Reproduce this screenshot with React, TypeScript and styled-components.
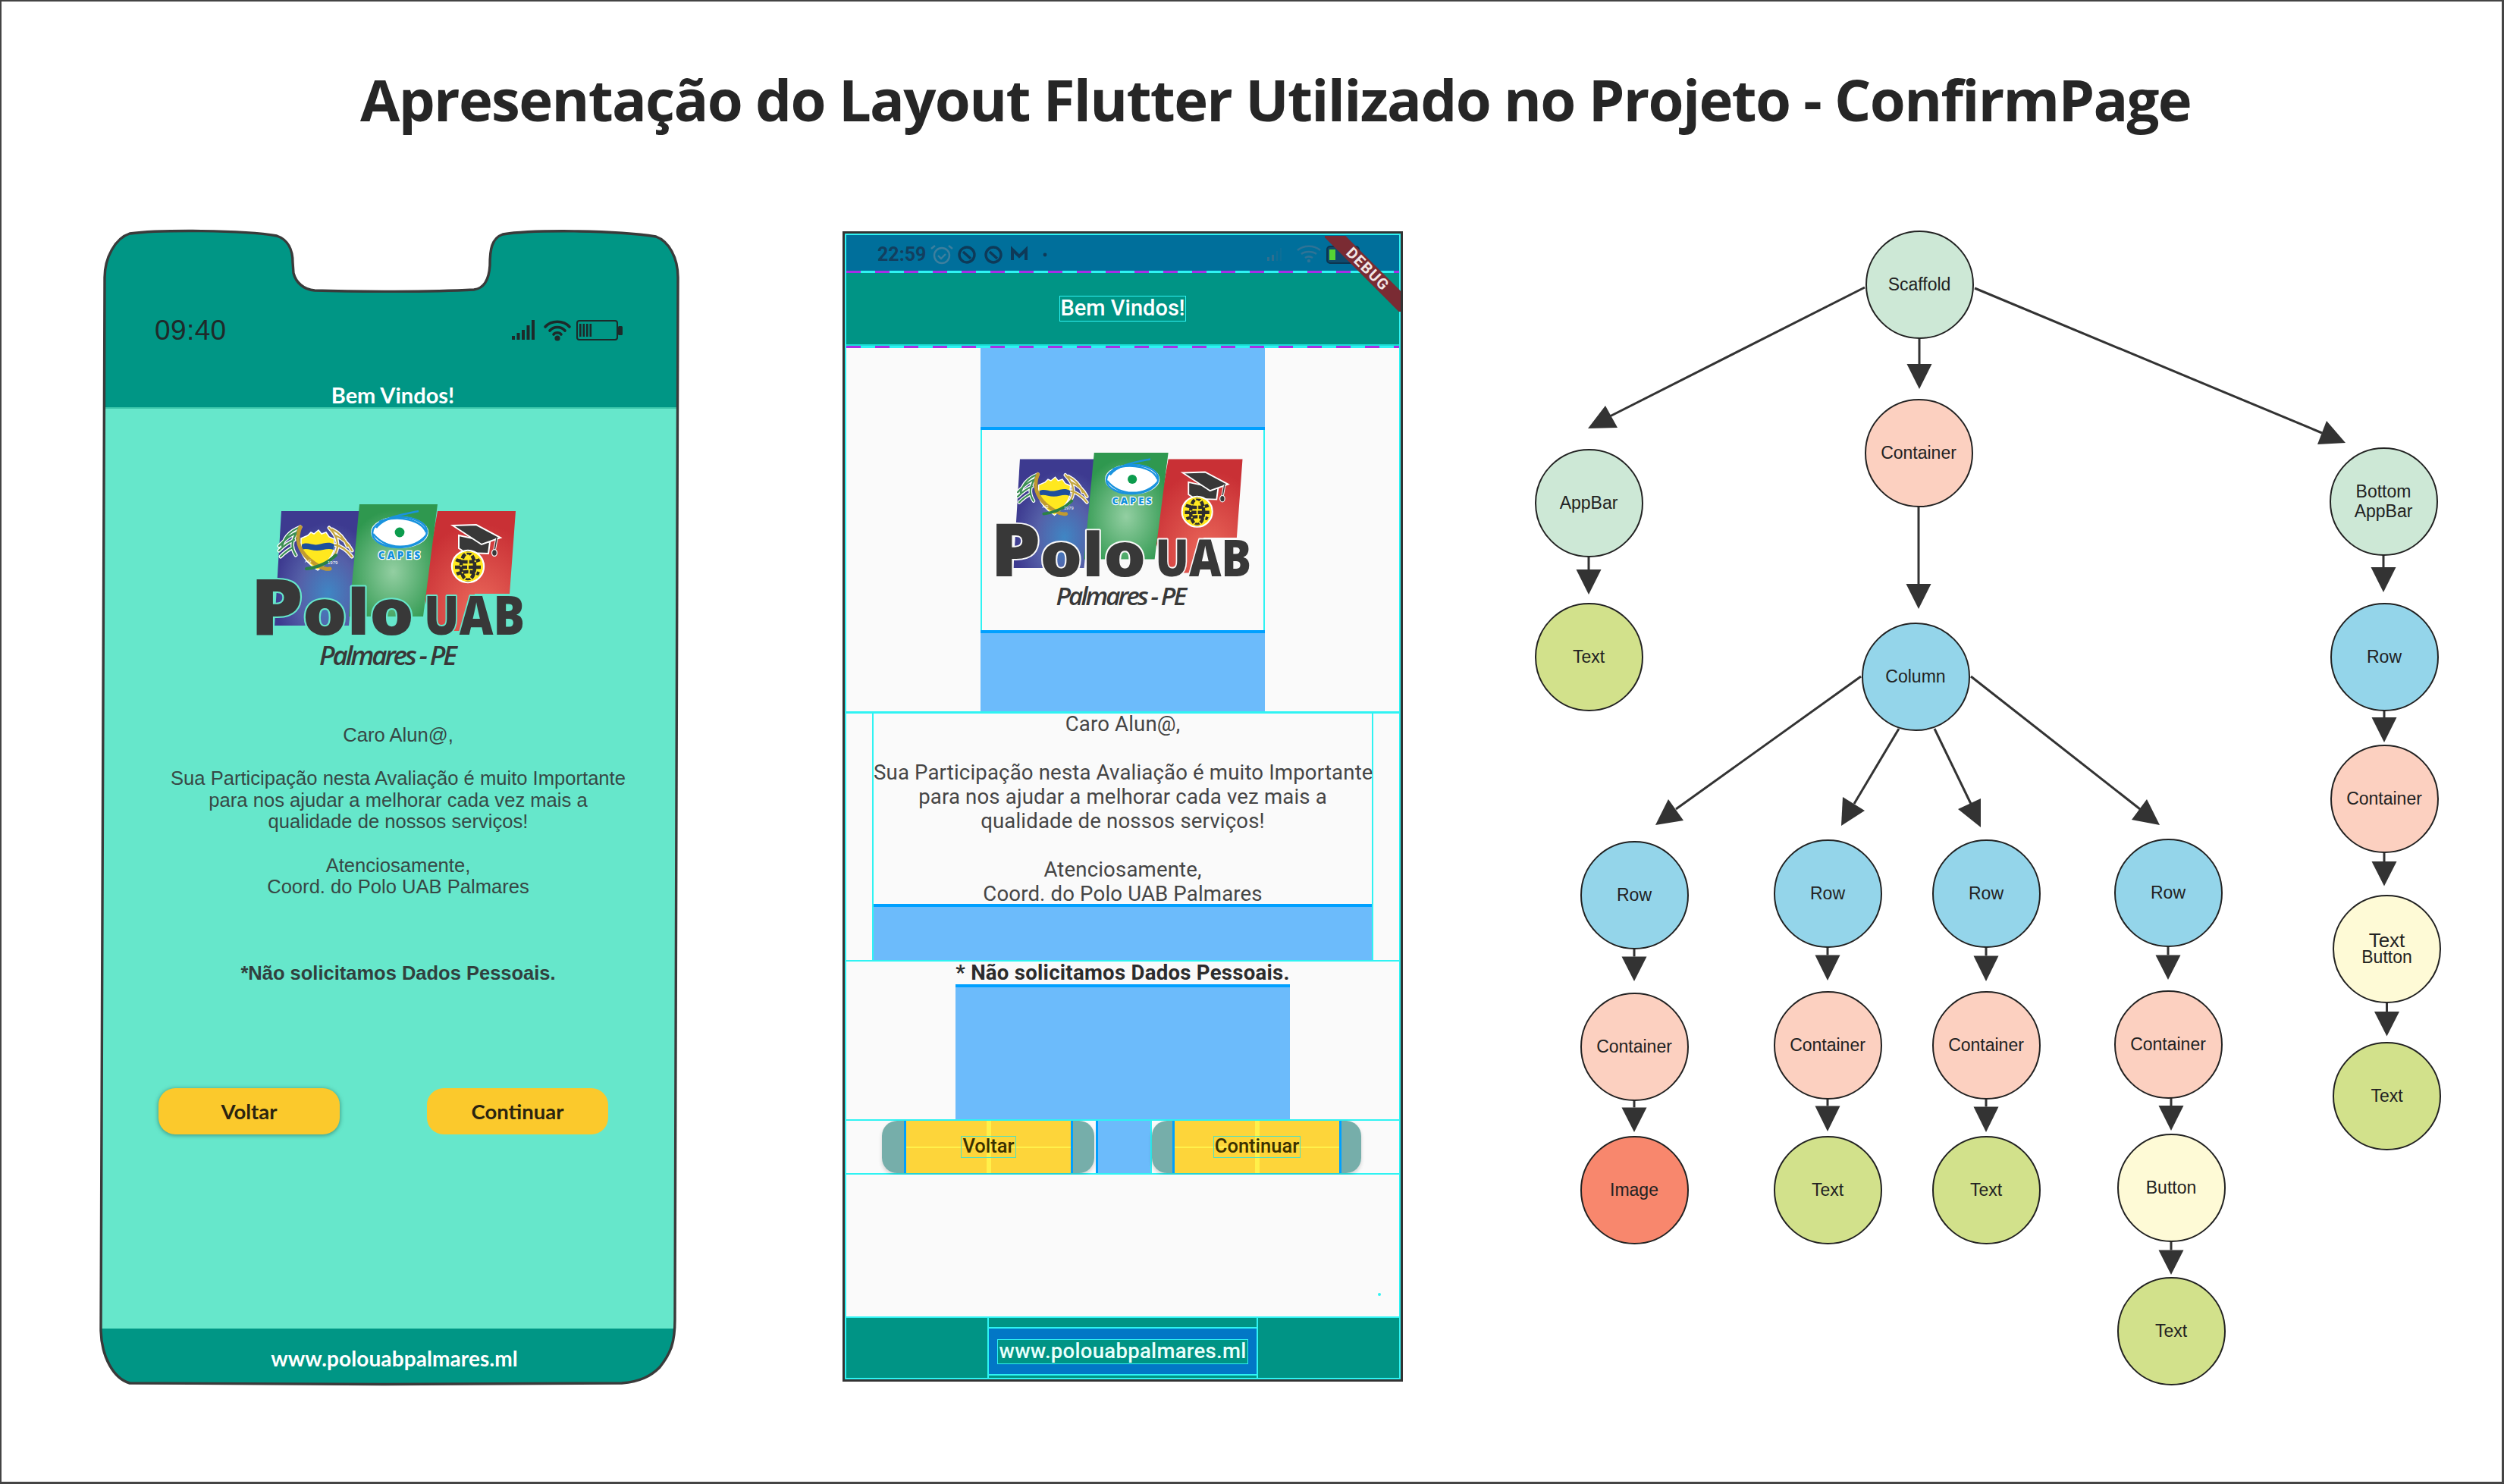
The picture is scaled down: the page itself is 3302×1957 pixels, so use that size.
import React from "react";
import styled, { createGlobalStyle } from "styled-components";

const Global = createGlobalStyle`
  html, body { margin: 0; padding: 0; background: #fff; }
  #root { width: 3302px; }
`;

const Page = styled.div`
  width: 3302px;
  height: 1957px;
  box-sizing: border-box;
  border: 2px solid #444;
  border-right-width: 3px;
  border-bottom-width: 3px;
  background: #fff;
  overflow: hidden;
`;

const Title = styled.h1`
  margin: 79px 0 119px;
  height: 100px;
  line-height: 100px;
  text-align: center;
  font-family: "Open Sans", "Liberation Sans", sans-serif;
  font-weight: 700;
  font-size: 76px;
  letter-spacing: -1.7px;
  color: #262626;
  padding-left: 63px;
`;

const Columns = styled.main`
  display: flex;
  align-items: flex-start;
  padding-left: 128px;
`;

/* ---------- Logo ---------- */

const LogoSvg = styled.svg<{ $w: number }>`
  display: block;
  overflow: visible;
  width: ${(p) => p.$w}px;
  height: ${(p) => Math.round((p.$w * 225) / 360)}px;
`;

const logoFont = `"Open Sans", "Liberation Sans", sans-serif`;

function Logo({ w, halo, id }: { w: number; halo: string; id: string }) {
  return (
    <LogoSvg $w={w} viewBox="0 0 360 225">
      <defs>
        <radialGradient id={`${id}b`} cx="0.62" cy="0.72" r="0.62">
          <stop offset="0" stopColor="#3f86c4" />
          <stop offset="0.55" stopColor="#5560a8" />
          <stop offset="1" stopColor="#3d3a90" />
        </radialGradient>
        <radialGradient id={`${id}g`} cx="0.5" cy="0.6" r="0.55">
          <stop offset="0" stopColor="#93cfa2" />
          <stop offset="1" stopColor="#2f984f" />
        </radialGradient>
        <radialGradient id={`${id}r`} cx="0.6" cy="0.85" r="0.75">
          <stop offset="0" stopColor="#ec6a5c" />
          <stop offset="1" stopColor="#c93035" />
        </radialGradient>
      </defs>
      <polygon points="41,14 146,14 130,165 32,165" fill={`url(#${id}b)`} />
      <polygon points="247,14 350,14 342,123 296,123 288,172 240,172 228,120" fill={`url(#${id}r)`} />
      <polygon points="144,5 247,5 228,153 130,153" fill={`url(#${id}g)`} />

      {/* crest */}
      <g fill="none" strokeLinecap="round">
        <path d="M66 35C48 42 45 52 42 60M66 35C55 50 52 60 60 72M62 42C50 46 42 56 38 60M58 52C48 56 42 62 38 66M56 62C48 66 44 70 40 74" stroke="#fff" strokeWidth="5" />
        <path d="M66 35C48 42 45 52 42 60M66 35C55 50 52 60 60 72M62 42C50 46 42 56 38 60M58 52C48 56 42 62 38 66M56 62C48 66 44 70 40 74" stroke="#3d8f55" strokeWidth="2.4" />
        <path d="M108 38C120 44 125 52 128 60M104 36C118 50 118 64 108 76M112 46C122 50 130 58 134 66M110 58C120 60 128 66 134 74" stroke="#fff" strokeWidth="5" />
        <path d="M108 38C120 44 125 52 128 60M104 36C118 50 118 64 108 76M112 46C122 50 130 58 134 66M110 58C120 60 128 66 134 74" stroke="#c5a843" strokeWidth="2.4" />
      </g>
      <path d="M67 50L76 46 80 42 84 44 90 39 94 44 100 42 104 48 111 51 110 66C106 78 96 86 89 92 80 86 70 78 67 66Z" fill="#ffe81f" stroke="#fff" strokeWidth="1.5" />
      <path d="M68 58C76 54 82 60 90 58 98 56 104 54 111 58L110 65C102 62 96 66 88 66 80 66 74 62 68 65Z" fill="#1e4f9c" />
      <path d="M66 35C60 50 62 64 78 78 88 86 98 92 105 90" fill="none" stroke="#c09a30" strokeWidth="5" strokeLinecap="round" />
      <path d="M113 72C103 82 92 88 74 90" fill="none" stroke="#2b8146" strokeWidth="4" strokeLinecap="round" />
      <text x="72" y="82" fontSize="6" fill="#fff" fontFamily="Liberation Sans, sans-serif">AG</text>
      <text x="102" y="84" fontSize="6" fill="#fff" fontFamily="Liberation Sans, sans-serif">1979</text>

      {/* CAPES */}
      <ellipse cx="197" cy="42" rx="36" ry="19" fill="#fff" stroke="#fff" strokeWidth="4" />
      <g fill="none" stroke="#1a93de" strokeWidth="2.6">
        <ellipse cx="197" cy="42" rx="36" ry="20" transform="rotate(-2 197 42)" />
        <path d="M166 36C176 22 202 18 222 14" />
        <path d="M162 44C180 66 214 66 232 46" />
        <path d="M170 28C196 18 226 26 232 42" />
      </g>
      <circle cx="197" cy="42" r="6.4" fill="#0c9c4d" />
      <text x="198" y="77" textAnchor="middle" fontFamily={logoFont} fontWeight={800} fontSize="13.5" letterSpacing="3.2" fill="#1190dc" stroke="#fff" strokeWidth="2.4" paintOrder="stroke">CAPES</text>

      {/* cap and globe */}
      <path d="M275 46L275 63 284 69 314 70 316 55Z" fill="#383838" stroke="#fff" strokeWidth="2" />
      <polygon points="267,33 298,32 330,49 305,58" fill="#383838" stroke="#fff" strokeWidth="2" />
      <path d="M325 50L322 66" stroke="#fff" strokeWidth="3.6" />
      <path d="M325 50L322 66" stroke="#383838" strokeWidth="1.6" />
      <ellipse cx="322" cy="69" rx="3.4" ry="4.4" fill="#383838" stroke="#fff" strokeWidth="1.2" />
      <circle cx="287" cy="87" r="21" fill="#ffe81f" stroke="#fff" strokeWidth="2.4" />
      <g fill="none" stroke="#2d2d2d" strokeWidth="4.6" strokeDasharray="7 2">
        <ellipse cx="287" cy="87" rx="9" ry="18" />
        <path d="M271 78C280 82 294 82 303 78M270 88H304M272 97C282 93 292 93 302 97" />
      </g>
      <circle cx="287" cy="87" r="19" fill="none" stroke="#ffe81f" strokeWidth="1.6" />

      {/* wordmark */}
      <g fontFamily={logoFont} fontWeight={800} fill="#383838" stroke={halo} strokeWidth="4" paintOrder="stroke" strokeLinejoin="round">
        <text x="0" y="177" fontSize="102" textLength="70" lengthAdjust="spacingAndGlyphs">P</text>
        <text x="69" y="177" fontSize="84" textLength="147" lengthAdjust="spacingAndGlyphs">olo</text>
        <text x="229" y="177" fontSize="71" textLength="133" lengthAdjust="spacingAndGlyphs">UAB</text>
      </g>
      <text x="91" y="217" fontFamily={logoFont} fontWeight={600} fontStyle="italic" fontSize="35" letterSpacing="-3.1" fill="#383838">Palmares - PE</text>
    </LogoSvg>
  );
}

/* ---------- Phone mockup ---------- */

const Phone = styled.section`
  position: relative;
  flex: none;
  width: 770px;
  height: 1530px;
`;

const PhoneFrame = styled.svg`
  position: absolute;
  left: 0;
  top: 0;
  width: 770px;
  height: 1530px;
`;

const PhoneContent = styled.div`
  position: relative;
  height: 100%;
  display: flex;
  flex-direction: column;
`;

const PhoneStatus = styled.div`
  margin-top: 120px;
  height: 32px;
  padding: 0 79px 0 74px;
  display: flex;
  justify-content: space-between;
  align-items: center;
`;

const PhoneTime = styled.span`
  font: 37px/32px "Liberation Sans", sans-serif;
  letter-spacing: 0.4px;
  color: #1f2a2a;
`;

const StatusIcons = styled.svg`
  display: block;
  width: 146px;
  height: 30px;
`;

const PhoneHeading = styled.div`
  margin-top: 51px;
  height: 36px;
  padding-left: 6px;
  text-align: center;
  font: 700 29px/36px Lato, "Open Sans", sans-serif;
  color: #fff;
`;

const PhoneLogoSlot = styled.div`
  margin: 121px 0 0 200px;
`;

const PhoneLetter = styled.p`
  margin: 70px 0 0;
  padding-left: 20px;
  text-align: center;
  font: 25.6px/28.6px "Liberation Sans", sans-serif;
  color: #374845;
`;

const PhoneNotice = styled.p`
  margin: 84px 0 0;
  padding-left: 20px;
  height: 30px;
  text-align: center;
  font: 700 25.5px/30px "Liberation Sans", sans-serif;
  color: #31403e;
`;

const PhoneButtons = styled.div`
  margin-top: 137px;
  padding-left: 79px;
  display: flex;
  gap: 115px;
`;

const PhoneButton = styled.button<{ $raised?: boolean }>`
  width: 239px;
  height: 61px;
  padding: 0;
  border: 0;
  border-radius: 22px;
  background: #fbc92c;
  font: 700 27.5px/59px Lato, "Open Sans", sans-serif;
  color: #2b2410;
  box-shadow: ${(p) => (p.$raised ? "0 1px 5px 1px rgba(40,110,90,.55)" : "none")};
`;

const PhoneFooter = styled.div`
  margin-top: 275px;
  padding-left: 10px;
  height: 40px;
  text-align: center;
  font: 700 28px/40px Lato, "Open Sans", sans-serif;
  letter-spacing: 0.1px;
  color: #fff;
`;

const outline =
  "M8 66C8 40 22 14 41 8C80 3 190 3 235 11C250 16 256 30 256 46L257 60C260 72 270 82 285 83C340 85 440 85 495 82C510 80 515 66 516 50C516 30 518 14 533 9C570 3 680 3 735 12C752 18 764 40 764 66L760 1440C760 1470 755 1484 740 1503C728 1515 714 1522 690 1524C520 1526 200 1526 41 1524C20 1518 4 1490 3 1455Z";

function PhoneMock() {
  return (
    <Phone>
      <PhoneFrame viewBox="0 0 770 1530">
        <defs>
          <clipPath id="phoneClip">
            <path d={outline} />
          </clipPath>
        </defs>
        <g clipPath="url(#phoneClip)">
          <rect width="770" height="238" fill="#009685" />
          <rect y="237" width="770" height="2" fill="#3cc8ac" />
          <rect y="239" width="770" height="1213" fill="#66e7cb" />
          <rect y="1452" width="770" height="78" fill="#009685" />
        </g>
        <path d={outline} fill="none" stroke="#3a3a3a" strokeWidth="3.4" />
      </PhoneFrame>
      <PhoneContent>
        <PhoneStatus>
          <PhoneTime>09:40</PhoneTime>
          <StatusIcons viewBox="0 0 146 30">
            <g fill="#1d2a2a">
              <rect x="0" y="22" width="4" height="5" />
              <rect x="6.5" y="18" width="4" height="9" />
              <rect x="13" y="14" width="4" height="13" />
              <rect x="19.5" y="8" width="4" height="19" />
              <rect x="26" y="1" width="4" height="26" />
              <circle cx="60" cy="25" r="3.6" />
              <rect x="89" y="6" width="2.6" height="17" />
              <rect x="93.5" y="6" width="2.6" height="17" />
              <rect x="98" y="6" width="2.6" height="17" />
              <rect x="102.5" y="6" width="2.6" height="17" />
              <rect x="140" y="9" width="6" height="12" rx="1.5" />
            </g>
            <g fill="none" stroke="#1d2a2a" strokeWidth="3.6" strokeLinecap="round">
              <path d="M44 10C52 1 68 1 76 10" />
              <path d="M50 15C55 9 65 9 70 15" />
              <path d="M55 20C57 17 63 17 65 20" />
            </g>
            <rect x="86" y="2" width="53" height="25" rx="3" fill="none" stroke="#1d2a2a" strokeWidth="2" />
          </StatusIcons>
        </PhoneStatus>
        <PhoneHeading>Bem Vindos!</PhoneHeading>
        <PhoneLogoSlot>
          <Logo w={360} halo="#66e7cb" id="a" />
        </PhoneLogoSlot>
        <PhoneLetter>
          Caro Alun@,
          <br />
          <br />
          Sua Participação nesta Avaliação é muito Importante
          <br />
          para nos ajudar a melhorar cada vez mais a
          <br />
          qualidade de nossos serviços!
          <br />
          <br />
          Atenciosamente,
          <br />
          Coord. do Polo UAB Palmares
        </PhoneLetter>
        <PhoneNotice>*Não solicitamos Dados Pessoais.</PhoneNotice>
        <PhoneButtons>
          <PhoneButton $raised>Voltar</PhoneButton>
          <PhoneButton>Continuar</PhoneButton>
        </PhoneButtons>
        <PhoneFooter>www.polouabpalmares.ml</PhoneFooter>
      </PhoneContent>
    </Phone>
  );
}

/* ---------- Debug capture ---------- */

const cyan = "#2ff3f3";
const guide = "#6cbbfb";
const line = "#00a0ff";
const teal = "#009485";

const Screen = styled.section`
  position: relative;
  flex: none;
  margin: 5px 0 0 211px;
  width: 739px;
  height: 1517px;
  box-sizing: border-box;
  border: 3px solid #333;
  background: ${cyan};
  padding: 2px;
  display: flex;
  flex-direction: column;
`;

const AndroidBar = styled.div`
  height: 47px;
  box-sizing: border-box;
  padding: 5px 0 0 41px;
  flex: none;
  background: #006f9b;
  display: flex;
  align-items: center;
`;

const AndroidTime = styled.span`
  font: 700 25px/30px Roboto, sans-serif;
  color: #123f5f;
  width: 70px;
`;

const AndroidIcons = styled.svg`
  display: block;
  width: 618px;
  height: 34px;
`;

const DashedRule = styled.div`
  flex: none;
  height: 3px;
  background: repeating-linear-gradient(90deg, #a72fe6 0 19px, ${cyan} 19px 38px);
`;

const AppBar = styled.div`
  flex: none;
  height: 96px;
  background: ${teal};
  border-bottom: 2px solid #19dfd6;
  box-sizing: border-box;
  display: flex;
  align-items: center;
  justify-content: center;
`;

const AppBarTitle = styled.span`
  display: block;
  height: 32px;
  border: 1.5px solid ${cyan};
  padding: 0 1px;
  font: 500 29px/31px Roboto, sans-serif;
  color: #fff;
`;

const LogoSection = styled.div`
  flex: none;
  height: 479px;
  background: #fafafa;
  border-bottom: 3px solid ${cyan};
  display: flex;
  justify-content: center;
`;

const LogoColumn = styled.div`
  width: 375px;
  display: flex;
  flex-direction: column;
`;

const BlueFill = styled.div<{ $h?: number }>`
  background: ${guide};
  ${(p) => (p.$h ? `height: ${p.$h}px; flex: none;` : "flex: 1;")}
`;

const LogoBox = styled.div`
  flex: none;
  height: 272px;
  box-sizing: border-box;
  border-top: 4px solid ${line};
  border-bottom: 4px solid ${line};
  box-shadow: inset 2px 0 0 ${cyan}, inset -2px 0 0 ${cyan};
  background: #fafafa;
  display: flex;
  justify-content: center;
  padding: 25px 7px 0 0;
`;

const LetterSection = styled.div`
  flex: none;
  height: 327px;
  box-sizing: border-box;
  background: #fafafa;
  border-bottom: 2px solid ${cyan};
  display: flex;
  justify-content: center;
`;

const LetterColumn = styled.div`
  width: 661px;
  box-sizing: border-box;
  border-inline: 2px solid ${cyan};
  display: flex;
  flex-direction: column;
`;

const LetterText = styled.p`
  flex: none;
  height: 255px;
  margin: 0;
  box-sizing: border-box;
  border-bottom: 4px solid ${line};
  overflow: visible;
  text-align: center;
  white-space: nowrap;
  font: 400 27.6px/32px Roboto, sans-serif;
  letter-spacing: 0.15px;
  color: #454545;
  & > span { display: block; margin-top: -2px; }
`;

const NoticeSection = styled.div`
  flex: none;
  height: 210px;
  box-sizing: border-box;
  background: #fafafa;
  border-bottom: 2px solid ${cyan};
  display: flex;
  justify-content: center;
`;

const NoticeColumn = styled.div`
  width: 441px;
  display: flex;
  flex-direction: column;
`;

const NoticeText = styled.div`
  flex: none;
  height: 34px;
  box-sizing: border-box;
  border-bottom: 4px solid ${line};
  text-align: center;
  white-space: nowrap;
  font: 700 27.6px/30px Roboto, sans-serif;
  letter-spacing: 0.25px;
  color: #2c2c2c;
`;

const ButtonRow = styled.div`
  flex: none;
  height: 71px;
  box-sizing: border-box;
  background: #fafafa;
  border-bottom: 2px solid ${cyan};
  padding-left: 47px;
  display: flex;
`;

const InspectedButton = styled.div`
  flex: none;
  height: 100%;
  display: flex;
  box-shadow: 0 3px 5px rgba(0, 0, 0, 0.16);
  border-radius: 20px;
`;

const ButtonCap = styled.div<{ $side: "left" | "right"; $w: number }>`
  width: ${(p) => p.$w}px;
  background: #76aeaa;
  border-radius: ${(p) => (p.$side === "left" ? "20px 0 0 20px" : "0 20px 20px 0")};
`;

const ButtonStripe = styled.div`
  width: 3px;
  background: ${line};
`;

const ButtonFace = styled.div`
  width: 217px;
  display: flex;
  align-items: center;
  justify-content: center;
  background:
    linear-gradient(#fff04a, #fff04a) center / 100% 2px no-repeat,
    linear-gradient(#fff04a, #fff04a) center / 6px 100% no-repeat,
    #fdd53a;
`;

const ButtonLabel = styled.span`
  display: block;
  height: 27px;
  border: 1.5px solid #4fe0c0;
  padding: 0 1px;
  font: 500 25.5px/25px Roboto, sans-serif;
  color: #3a3000;
`;

const BlueGap = styled.div`
  flex: none;
  width: 74px;
  margin-left: 2px;
  background: ${guide};
  border-left: 3px solid ${line};
  border-right: 2px solid ${cyan};
  box-sizing: border-box;
`;

const EmptyArea = styled.div`
  position: relative;
  flex: 1;
  background: #fafafa;
  border-bottom: 2px solid ${cyan};
`;

const Speck = styled.i`
  position: absolute;
  left: 701px;
  bottom: 27px;
  width: 4px;
  height: 4px;
  border-radius: 50%;
  background: ${cyan};
`;

const BottomBar = styled.div`
  flex: none;
  height: 79px;
  background: ${teal};
  display: flex;
  justify-content: center;
`;

const BottomBox = styled.div`
  width: 357px;
  box-sizing: border-box;
  border-inline: 2px solid ${cyan};
  padding-top: 12px;
`;

const BottomInner = styled.div`
  height: 64px;
  box-sizing: border-box;
  border-block: 2px solid ${cyan};
  background: #0277c6;
  display: flex;
  align-items: center;
  justify-content: center;
`;

const BottomLabel = styled.span`
  display: block;
  height: 33px;
  padding: 0 1px;
  box-sizing: border-box;
  border: 1.5px solid ${cyan};
  background: ${teal};
  font: 500 27.5px/29px Roboto, sans-serif;
  letter-spacing: 0.3px;
  color: #eafffb;
  white-space: nowrap;
`;

const Corner = styled.div`
  position: absolute;
  top: 3px;
  right: 0;
  width: 100px;
  height: 100px;
  overflow: hidden;
`;

const Ribbon = styled.div`
  position: absolute;
  left: -27px;
  top: 30px;
  width: 160px;
  height: 21px;
  background: #7a2b33;
  transform: rotate(45deg);
  text-align: center;
  padding-left: 10px;
  box-sizing: border-box;
  font: 700 20px/21px Roboto, sans-serif;
  letter-spacing: 1.4px;
  color: #f2e6e6;
`;

function DebugButton({ label, leftW, rightW }: { label: string; leftW: number; rightW: number }) {
  return (
    <InspectedButton>
      <ButtonCap $side="left" $w={leftW} />
      <ButtonStripe />
      <ButtonFace>
        <ButtonLabel>{label}</ButtonLabel>
      </ButtonFace>
      <ButtonStripe />
      <ButtonCap $side="right" $w={rightW} />
    </InspectedButton>
  );
}

function DebugScreen() {
  return (
    <Screen>
      <AndroidBar>
        <AndroidTime>22:59</AndroidTime>
        <AndroidIcons viewBox="30 0 618 34">
          <g fill="none" stroke="#3d7f9e" strokeWidth="2.4">
            <circle cx="45" cy="18" r="10" />
            <path d="M36 5L31 9M54 5L59 9M40 18L44 22 50 16" />
          </g>
          <g fill="none" stroke="#0e3a58" strokeWidth="3.4">
            <circle cx="78" cy="17" r="10" />
            <path d="M73 13L83 22" />
            <circle cx="113" cy="17" r="10" />
            <path d="M108 13L118 22" />
            <path d="M138 24V10L147 19 156 10V24" strokeWidth="4" />
          </g>
          <circle cx="181" cy="17" r="2.4" fill="#0e3a58" />
          <g fill="#2f6f8f">
            <rect x="474" y="20" width="3" height="5" />
            <rect x="480" y="17" width="3" height="8" />
            <rect x="486" y="12" width="2" height="13" opacity="0.4" />
            <rect x="491" y="8" width="2" height="17" opacity="0.3" />
          </g>
          <g fill="none" stroke="#2f7396" strokeWidth="2.6">
            <path d="M514 11C522 4 536 4 544 11M519 16C524 12 534 12 539 16M524 21C527 19 531 19 534 21" />
          </g>
          <circle cx="529" cy="25" r="2.2" fill="#2f7396" />
          <rect x="553" y="6" width="42" height="22" rx="4" fill="#104a6c" stroke="#0c3550" strokeWidth="2" />
          <rect x="556" y="10" width="8" height="14" fill="#55d433" />
        </AndroidIcons>
      </AndroidBar>
      <DashedRule />
      <AppBar>
        <AppBarTitle>Bem Vindos!</AppBarTitle>
      </AppBar>
      <DashedRule />
      <LogoSection>
        <LogoColumn>
          <BlueFill $h={104} />
          <LogoBox>
            <Logo w={342} halo="#fafafa" id="b" />
          </LogoBox>
          <BlueFill />
        </LogoColumn>
      </LogoSection>
      <LetterSection>
        <LetterColumn>
          <LetterText>
            <span>
              Caro Alun@,
              <br />
              <br />
              Sua Participação nesta Avaliação é muito Importante
              <br />
              para nos ajudar a melhorar cada vez mais a
              <br />
              qualidade de nossos serviços!
              <br />
              <br />
              Atenciosamente,
              <br />
              Coord. do Polo UAB Palmares
            </span>
          </LetterText>
          <BlueFill />
        </LetterColumn>
      </LetterSection>
      <NoticeSection>
        <NoticeColumn>
          <NoticeText>* Não solicitamos Dados Pessoais.</NoticeText>
          <BlueFill />
        </NoticeColumn>
      </NoticeSection>
      <ButtonRow>
        <DebugButton label="Voltar" leftW={29} rightW={28} />
        <BlueGap />
        <DebugButton label="Continuar" leftW={27} rightW={26} />
      </ButtonRow>
      <EmptyArea>
        <Speck />
      </EmptyArea>
      <BottomBar>
        <BottomBox>
          <BottomInner>
            <BottomLabel>www.polouabpalmares.ml</BottomLabel>
          </BottomInner>
        </BottomBox>
      </BottomBar>
      <Corner>
        <Ribbon>DEBUG</Ribbon>
      </Corner>
    </Screen>
  );
}

/* ---------- Widget tree ---------- */

const Tree = styled.section`
  position: relative;
  flex: none;
  margin-left: 130px;
  width: 1320px;
  height: 1600px;
`;

const TreeLines = styled.svg`
  position: absolute;
  left: 0;
  top: 0;
  width: 1320px;
  height: 1600px;
`;

const tones = {
  green: "#cde8d6",
  peach: "#fcd0c0",
  blue: "#94d5ea",
  lime: "#d2e18b",
  salmon: "#f8876d",
  cream: "#fefad6",
};
type Tone = keyof typeof tones;

const Node = styled.div<{ $x: number; $y: number; $tone: Tone }>`
  position: absolute;
  left: ${(p) => p.$x - 1980 - 71.5}px;
  top: ${(p) => p.$y - 300 - 71.5}px;
  width: 143px;
  height: 143px;
  box-sizing: border-box;
  border: 2.5px solid #222;
  border-radius: 50%;
  background: ${(p) => tones[p.$tone]};
  display: flex;
  flex-direction: column;
  align-items: center;
  justify-content: center;
  text-align: center;
  font: 23px/26px "Liberation Sans", sans-serif;
  color: #222;
`;

const BigLine = styled.span`
  font-size: 26px;
  line-height: 22px;
`;

const SmallLine = styled.span`
  line-height: 22px;
`;

const nodes: [number, number, Tone, string][] = [
  [2531, 375, "green", "Scaffold"],
  [2530, 597, "peach", "Container"],
  [2095, 663, "green", "AppBar"],
  [2095, 866, "lime", "Text"],
  [2526, 892, "blue", "Column"],
  [3143, 661, "green", "Bottom|AppBar"],
  [3144, 866, "blue", "Row"],
  [3144, 1053, "peach", "Container"],
  [3147.5, 1445, "lime", "Text"],
  [2155, 1180, "blue", "Row"],
  [2155, 1380, "peach", "Container"],
  [2155, 1569, "salmon", "Image"],
  [2410, 1178, "blue", "Row"],
  [2410, 1378, "peach", "Container"],
  [2410, 1569, "lime", "Text"],
  [2619, 1178, "blue", "Row"],
  [2619, 1378, "peach", "Container"],
  [2619, 1569, "lime", "Text"],
  [2859, 1177, "blue", "Row"],
  [2859, 1377, "peach", "Container"],
  [2863, 1566, "cream", "Button"],
  [2863, 1755, "lime", "Text"],
];

/* x, line start y, head base y, tip y */
const drops: [number, number, number, number][] = [
  [2531, 446, 480, 513],
  [2095, 734, 751, 784],
  [2530, 668, 770, 803],
  [3143, 732, 748, 781],
  [3144, 937, 946, 979],
  [3144, 1124, 1136, 1168.5],
  [3147.5, 1322, 1334, 1366.5],
  [2155, 1251, 1261.5, 1294],
  [2155, 1451, 1460.5, 1493],
  [2410, 1249, 1259.5, 1293],
  [2410, 1449, 1458.5, 1492],
  [2619, 1249, 1260.5, 1294],
  [2619, 1449, 1459.5, 1493],
  [2859, 1248, 1259.5, 1292],
  [2863, 1448, 1458, 1491],
  [2863, 1637, 1648.5, 1681],
];

const slants: { from: string; head: string }[] = [
  { from: "2459,379 2121,550", head: "2117,535 2133,564 2094,565" },
  { from: "2604,380 3062,571", head: "3068,555 3093,584 3056,586" },
  { from: "2454,892 2210,1067", head: "2200,1054 2220,1082 2183,1088" },
  { from: "2504,961 2445,1060", head: "2430,1051 2459,1069 2428,1089" },
  { from: "2551,961 2599,1060", head: "2612,1053 2582,1067 2612,1091" },
  { from: "2599,892 2822,1067", head: "2831,1054 2811,1081 2848,1088" },
];

function WidgetTree() {
  return (
    <Tree>
      <TreeLines viewBox="1980 300 1320 1600">
        <g stroke="#333" strokeWidth="3" fill="none">
          {drops.map(([x, a, b]) => (
            <line key={`${x}-${a}`} x1={x} y1={a} x2={x} y2={b} />
          ))}
          {slants.map((s) => (
            <polyline key={s.from} points={s.from} />
          ))}
        </g>
        <g fill="#333">
          {drops.map(([x, a, b, t]) => (
            <polygon key={`${x}-${a}`} points={`${x - 16.5},${b} ${x + 16.5},${b} ${x},${t}`} />
          ))}
          {slants.map((s) => (
            <polygon key={s.head} points={s.head} />
          ))}
        </g>
      </TreeLines>
      {nodes.map(([x, y, tone, label]) => {
        const parts = label.split("|");
        return (
          <Node key={`${x}-${y}`} $x={x} $y={y} $tone={tone}>
            {parts.map((part) => (
              <span key={part}>{part}</span>
            ))}
          </Node>
        );
      })}
      <Node $x={3147.5} $y={1251} $tone="cream">
        <BigLine>Text</BigLine>
        <SmallLine>Button</SmallLine>
      </Node>
    </Tree>
  );
}

export default function App() {
  return (
    <Page>
      <Global />
      <Title>Apresentação do Layout Flutter Utilizado no Projeto - ConfirmPage</Title>
      <Columns>
        <PhoneMock />
        <DebugScreen />
        <WidgetTree />
      </Columns>
    </Page>
  );
}
